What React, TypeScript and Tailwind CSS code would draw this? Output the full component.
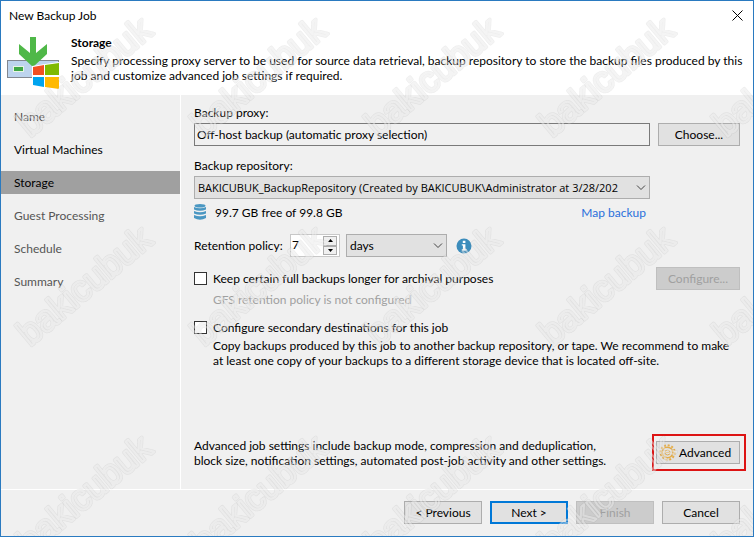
import { useState } from "react";

const STEPS = [
  { label: "Name", tone: "text-[#444]" },
  { label: "Virtual Machines", tone: "text-black" },
  { label: "Storage", tone: "text-black" },
  { label: "Guest Processing", tone: "text-[#555]" },
  { label: "Schedule", tone: "text-[#555]" },
  { label: "Summary", tone: "text-[#555]" },
];

const buttonClass = "h-[23px] border border-[#adadad] bg-[#e1e1e1] text-black";
const disabledClass = "h-[23px] border border-[#bfbfbf] bg-[#cccccc] text-[#a0a0a0]";

function JobIcon() {
  return (
    <svg width="54" height="54" viewBox="0 0 54 54" aria-hidden="true">
      <rect x="1.5" y="23.5" width="51" height="17" fill="#bdd4ee" stroke="#828790" />
      <rect x="7.5" y="29.5" width="10" height="5" fill="#3fa846" stroke="#e8f4e4" />
      <path d="M24 0h6v16l11-9v10L27 30 13 17V7l11 9z" fill="#4fb848" />
      <path d="M26 29l27-4v28l-27-3z" fill="#fff" />
      <path d="M27 30l11-2v10H27z" fill="#f25022" />
      <path d="M39 28l14-2v12H39z" fill="#7fba00" />
      <path d="M27 40h11v10l-11-2z" fill="#00a4ef" />
      <path d="M39 40h14v12l-14-2z" fill="#ffb900" />
    </svg>
  );
}

function DatabaseIcon() {
  return (
    <svg width="12" height="16" viewBox="0 0 12 16" aria-hidden="true">
      <g fill="#4a97c2">
        <ellipse cx="6" cy="1.8" rx="5.5" ry="1.8" />
        <path d="M0 3q6 2.4 12 0v2.6q-6 2.4-12 0z" />
        <path d="M0 7q6 2.4 12 0v2.6q-6 2.4-12 0z" />
        <path d="M0 11q6 2.4 12 0v3q-6 3.4-12 0z" />
      </g>
    </svg>
  );
}

function InfoIcon() {
  return (
    <svg width="16" height="16" viewBox="0 0 16 16" aria-hidden="true">
      <circle cx="8" cy="8" r="7.5" fill="#3c8dbc" />
      <path d="M6.8 2.8h2.6v2.2H6.8zM5.8 6.3h3.6v5h1.2v1.3H5.8v-1.3h1.1V7.6H5.8z" fill="#fff" />
    </svg>
  );
}

function GearIcon() {
  return (
    <svg width="17" height="17" viewBox="0 0 17 17" fill="none" stroke="#e5ad48" aria-hidden="true">
      <circle cx="8.5" cy="8.5" r="7.2" strokeWidth="2" strokeDasharray="2 1.77" />
      <circle cx="8.5" cy="8.5" r="5.3" strokeWidth="1.6" />
      <circle cx="8.5" cy="8.5" r="2.5" strokeWidth="1" />
      <path d="M6.500 8.500h4" strokeWidth="1" />
    </svg>
  );
}

function Chevron() {
  return (
    <svg
      className="pointer-events-none absolute right-1 top-2"
      width="10"
      height="8"
      viewBox="0 0 10 8"
      fill="none"
      stroke="#444"
      aria-hidden="true"
    >
      <path d="M1 1.5l4 4 4-4" />
    </svg>
  );
}

function Watermark() {
  return (
    <svg className="pointer-events-none absolute inset-0 h-full w-full" aria-hidden="true">
      <defs>
        <pattern id="mark" width="174" height="209" patternUnits="userSpaceOnUse">
          <g
            fontFamily="Liberation Sans, sans-serif"
            fontSize="36"
            fill="none"
            strokeLinejoin="round"
            transform="translate(29 137) rotate(-40)"
          >
            <text stroke="#888" strokeOpacity="0.14" strokeWidth="3.5">bakicubuk</text>
            <text stroke="#fff" strokeOpacity="0.4" strokeWidth="2">bakicubuk</text>
          </g>
        </pattern>
      </defs>
      <rect width="100%" height="100%" fill="url(#mark)" />
    </svg>
  );
}

export default function App() {
  const [days, setDays] = useState(7);
  const [keepFull, setKeepFull] = useState(false);
  const [secondary, setSecondary] = useState(false);

  return (
    <div className="relative flex min-h-screen flex-col overflow-hidden border border-[#2a7ac0] bg-[#f0f0f0] font-[Lato,sans-serif] text-[12px] leading-[15px] text-black">
      <header className="bg-white pb-1">
        <div className="flex h-7 items-center justify-between pl-2 pr-[10px]">
          <span>New Backup Job</span>
          <button type="button" aria-label="Close">
            <svg width="11" height="11" viewBox="0 0 11 11" stroke="#000" aria-hidden="true">
              <path d="M.5.5l10 10M10.5.5l-10 10" />
            </svg>
          </button>
        </div>
        <div className="flex gap-[11px] pl-[5px] pr-2">
          <div className="shrink-0 pt-2">
            <JobIcon />
          </div>
          <div className="pt-[6px]">
            <h1 className="mb-[3px] font-bold">Storage</h1>
            <p>
              Specify processing proxy server to be used for source data retrieval, backup repository to store the backup files produced by this
              job and customize advanced job settings if required.
            </p>
          </div>
        </div>
      </header>

      <div className="flex flex-1">
        <nav className="w-[180px] shrink-0 border-r border-white pt-[10px]">
          <ul className="flex flex-col gap-[10px]">
            {STEPS.map((step) => (
              <li
                key={step.label}
                className={`flex h-[23px] items-center pl-[13px] ${step.tone} ${step.label === "Storage" ? "bg-[#a0a0a0]" : ""}`}
              >
                {step.label}
              </li>
            ))}
          </ul>
        </nav>

        <main className="flex min-w-0 flex-1 flex-col pb-[18px] pl-[13px] pr-[13px] pt-[10px]">
          <label htmlFor="proxy">Backup proxy:</label>
          <div className="mt-[3px] flex gap-2">
            <input
              id="proxy"
              readOnly
              value="Off-host backup (automatic proxy selection)"
              className="h-[23px] min-w-0 flex-1 border border-[#7a7a7a] bg-[#f0f0f0] px-[2px] outline-none"
            />
            <button type="button" className={`${buttonClass} w-[82px]`}>Choose...</button>
          </div>

          <label htmlFor="repo" className="mt-3">Backup repository:</label>
          <div className="mr-[90px] mt-[3px]">
            <div className="relative">
              <select
                id="repo"
                className="h-[23px] w-full appearance-none overflow-hidden border border-[#adadad] bg-[#e1e1e1] pl-[3px] pr-[18px] font-['Open_Sans',sans-serif] text-[11px]"
              >
                <option>BAKICUBUK_BackupRepository (Created by BAKICUBUK\Administrator at 3/28/202</option>
              </select>
              <Chevron />
            </div>
            <div className="mt-[5px] flex h-4 items-center justify-between pr-1">
              <span className="flex items-center gap-[9px]">
                <DatabaseIcon />
                99.7 GB free of 99.8 GB
              </span>
              <a href="#map" className="text-[#2a6fdb]">Map backup</a>
            </div>
          </div>

          <div className="mt-[14px] flex items-center">
            <label htmlFor="days" className="w-24">Retention policy:</label>
            <div className="flex h-[23px] w-[50px] border border-[#c8c8c8] bg-white">
              <input
                id="days"
                value={days}
                onChange={(e) => setDays(Number(e.target.value) || 0)}
                className="mb-[3px] w-8 pl-[1px] outline-none"
              />
              <div className="flex flex-col py-[1px]">
                <button type="button" aria-label="More" onClick={() => setDays(days + 1)} className="flex h-[10px] w-[14px] items-center justify-center border border-[#adadad] bg-[#f0f0f0]">
                  <svg width="5" height="3" viewBox="0 0 5 3" aria-hidden="true"><path d="M0 3L2.5 0 5 3z" /></svg>
                </button>
                <button type="button" aria-label="Less" onClick={() => setDays(Math.max(1, days - 1))} className="flex h-[10px] w-[14px] items-center justify-center border border-[#adadad] bg-[#f0f0f0]">
                  <svg width="5" height="3" viewBox="0 0 5 3" aria-hidden="true"><path d="M0 0l2.5 3L5 0z" /></svg>
                </button>
              </div>
            </div>
            <div className="relative ml-[6px] w-[101px]">
              <select aria-label="Retention unit" className="h-[23px] w-full appearance-none border border-[#adadad] bg-[#e1e1e1] pl-[3px]">
                <option>days</option>
              </select>
              <Chevron />
            </div>
            <span className="ml-[9px]">
              <InfoIcon />
            </span>
          </div>

          <div className="mt-[10px] flex items-center justify-between">
            <label className="flex items-center gap-[6px]">
              <input
                type="checkbox"
                checked={keepFull}
                onChange={(e) => setKeepFull(e.target.checked)}
                className="size-[13px] appearance-none border border-[#333] bg-white checked:bg-[#0078d7]"
              />
              Keep certain full backups longer for archival purposes
            </label>
            <button type="button" disabled className={`${disabledClass} w-[84px]`}>Configure...</button>
          </div>
          <p className="ml-[19px] mt-[2px] text-[#a0a0a0]">GFS retention policy is not configured</p>

          <label className="mt-[13px] flex items-center gap-[6px]">
            <input
              type="checkbox"
              checked={secondary}
              onChange={(e) => setSecondary(e.target.checked)}
              className="size-[13px] appearance-none border border-[#333] bg-white checked:bg-[#0078d7]"
            />
            Configure secondary destinations for this job
          </label>
          <p className="ml-[19px] mt-[3px]">
            Copy backups produced by this job to another backup repository, or tape. We recommend to make
            at least one copy of your backups to a different storage device that is located off-site.
          </p>

          <div className="mt-auto flex items-center justify-between">
            <p className="max-w-[430px]">
              Advanced job settings include backup mode, compression and deduplication,
              block size, notification settings, automated post-job activity and other settings.
            </p>
            <div className="-mr-[6px] border-2 border-[#dd1414] py-[5px] pl-[2px] pr-1">
              <button type="button" className={`${buttonClass} flex w-[84px] items-center gap-[3px] pl-[2px]`}>
                <GearIcon />
                Advanced
              </button>
            </div>
          </div>
        </main>
      </div>

      <footer className="flex justify-end gap-2 border-t border-white pb-3 pl-2 pr-[13px] pt-[11px]">
        <button type="button" className={`${buttonClass} w-[78px]`}>&lt; Previous</button>
        <button type="button" className="h-[23px] w-[78px] border-2 border-[#0078d7] bg-[#e1e1e1]">Next &gt;</button>
        <button type="button" disabled className={`${disabledClass} w-[78px]`}>Finish</button>
        <button type="button" className={`${buttonClass} w-[78px]`}>Cancel</button>
      </footer>
      <Watermark />
    </div>
  );
}
